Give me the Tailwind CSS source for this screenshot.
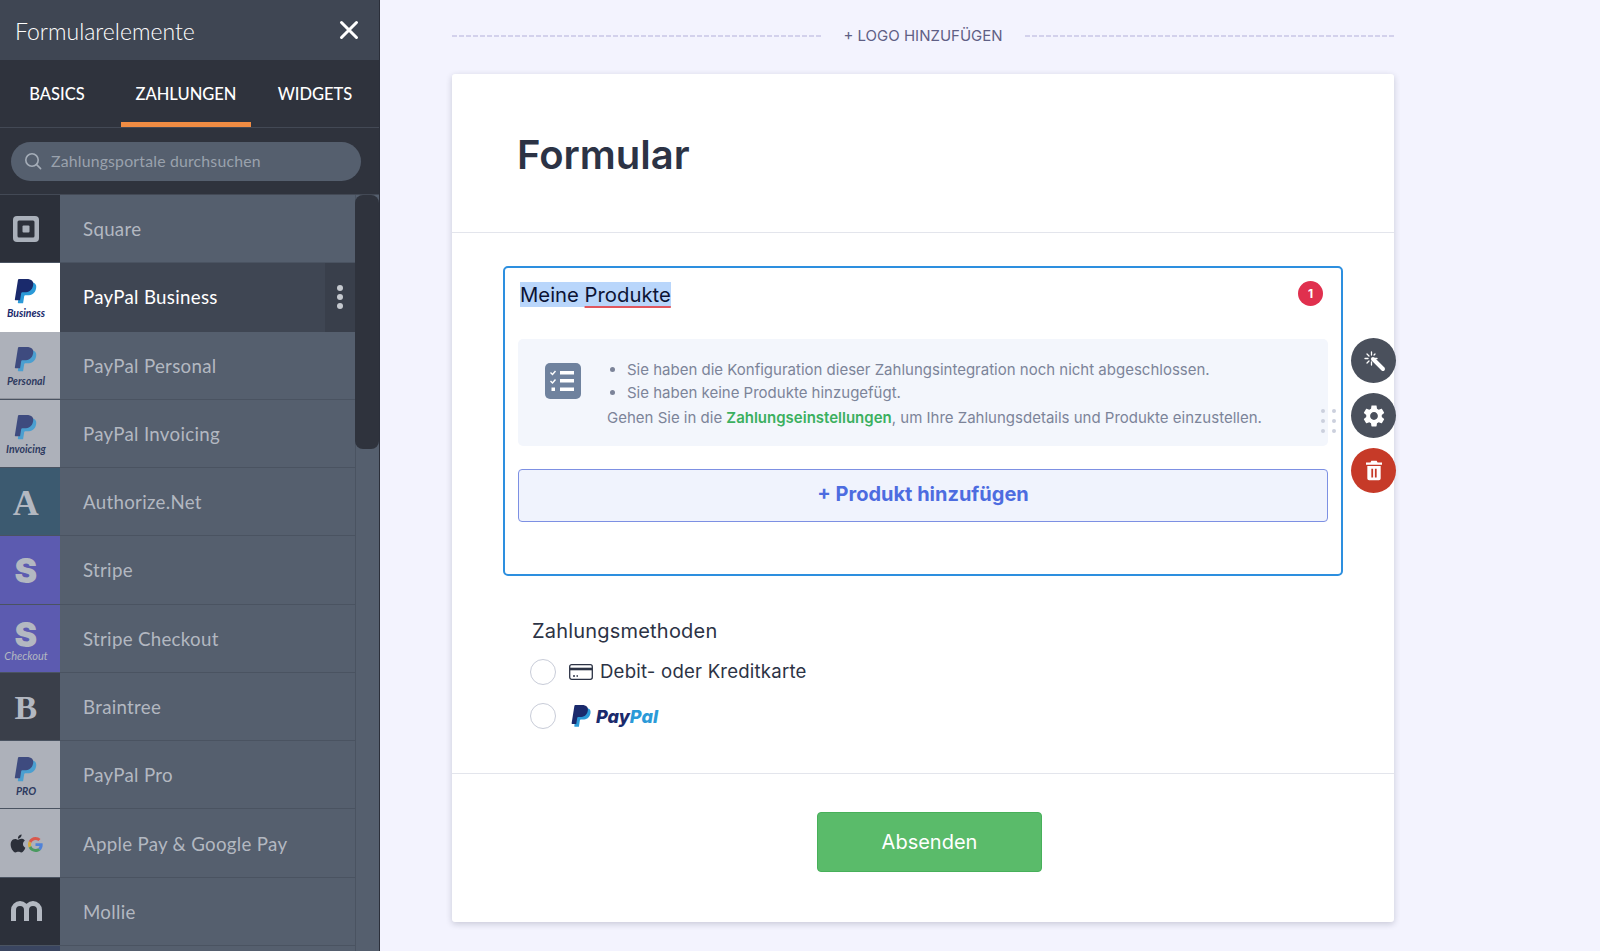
<!DOCTYPE html>
<html lang="de">
<head>
  <meta charset="UTF-8">
  <meta name="viewport" content="width=device-width, initial-scale=1.0">
  <title>Formular</title>
  <script src="https://cdn.jsdelivr.net/npm/@tailwindcss/browser@4"></script>
</head>
<body class="h-[951px] overflow-hidden bg-[#f3f3fe] font-['Inter',sans-serif]">
  <svg class="hidden">
    <symbol id="pp" viewBox="0 0 26 28">
      <path fill="#2b9ad8" d="M10.076 24.337H5.47a.641.641 0 0 1-.633-.74L7.944 3.901C8.026 3.382 8.474 3 8.998 3h7.46c2.57 0 4.578.543 5.69 1.81 1.01 1.15 1.304 2.42 1.012 4.287-.023.143-.047.288-.077.437-.983 5.05-4.349 6.797-8.647 6.797h-2.19c-.524 0-.968.382-1.05.9l-1.12 7.106z"/>
      <path fill="#1a2a6c" d="M7.076 21.337H2.47a.641.641 0 0 1-.633-.74L4.944.901C5.026.382 5.474 0 5.998 0h7.46c2.57 0 4.578.543 5.69 1.81 1.01 1.15 1.304 2.42 1.012 4.287-.023.143-.047.288-.077.437-.983 5.05-4.349 6.797-8.647 6.797h-2.19c-.524 0-.968.382-1.05.9l-1.12 7.106z"/>
    </symbol>
  </svg>

  <div class="flex h-full">
    <!-- Sidebar -->
    <aside class="relative w-[380px] shrink-0 h-full overflow-hidden border-r border-[#2b2f3a] bg-[#555f6e] font-['Lato',sans-serif]">
      <div class="h-[60px] flex items-center justify-between pl-[15px] pr-[20px] bg-[#3f4653]">
        <span class="pt-[3px] text-[23px] font-light text-white">Formularelemente</span>
        <svg class="w-[20px] h-[20px]" viewBox="0 0 20 20" fill="none" stroke="white" stroke-width="3" stroke-linecap="round"><path d="M2.5 2.5l15 15M17.5 2.5l-15 15"/></svg>
      </div>

      <div class="h-[68px] flex bg-[#2f333d] border-b border-[#434955] text-white text-[16.5px] font-medium">
        <div class="w-[121px] flex items-center justify-center pr-[7px] pt-[2px]">BASICS</div>
        <div class="w-[130px] flex items-center justify-center pt-[7px] border-b-[5px] border-[#f08c43]">ZAHLUNGEN</div>
        <div class="flex-1 flex items-center justify-center pt-[2px]">WIDGETS</div>
      </div>

      <div class="h-[67px] flex items-center pl-[11px] pr-[18px] bg-[#2f333d] border-b border-[#434955]">
        <div class="h-[39px] w-full flex items-center gap-[9px] pl-[13px] rounded-full bg-[#555f6e]">
          <svg class="w-[18px] h-[18px]" viewBox="0 0 18 18" fill="none" stroke="#a5adb8" stroke-width="1.6" stroke-linecap="round"><circle cx="8" cy="8" r="6.2"/><path d="M12.6 12.6l4 4"/></svg>
          <span class="text-[15.8px] tracking-[0.2px] text-[#9aa2ad]">Zahlungsportale durchsuchen</span>
        </div>
      </div>

      <div class="w-[355px] text-[18.7px] tracking-[0.3px] text-[#b3b8c1]">
        <div class="h-[68.27px] flex border-b border-[#4a5361]">
          <div class="w-[60px] shrink-0 flex items-center justify-center pr-[8px] bg-[#2c303a]">
            <svg class="w-[26px] h-[26px]" viewBox="0 0 26 26"><rect width="26" height="26" rx="4" fill="#aab0ba"/><rect x="4.5" y="4.5" width="17" height="17" rx="1.5" fill="#2c303a"/><rect x="9.5" y="9.5" width="7" height="7" rx="1" fill="#aab0ba"/></svg>
          </div>
          <div class="flex-1 flex items-center pl-[23px]">Square</div>
        </div>

        <div class="h-[68.27px] flex bg-[#3f4653] text-white">
          <div class="w-[60px] shrink-0 flex flex-col items-center justify-center pt-[4px] pr-[8px] bg-white">
            <svg class="w-[26px] h-[28px] shrink-0"><use href="#pp"/></svg>
            <span class="text-[10.5px] leading-[12px] tracking-normal italic font-bold text-[#1a2a6c]">Business</span>
          </div>
          <div class="flex-1 flex items-center pl-[23px]">PayPal Business</div>
          <div class="w-[30px] flex flex-col items-center justify-center gap-[3px] bg-[#393f4b]">
            <span class="w-[6px] h-[6px] rounded-full bg-[#c5c9cf]"></span>
            <span class="w-[6px] h-[6px] rounded-full bg-[#c5c9cf]"></span>
            <span class="w-[6px] h-[6px] rounded-full bg-[#c5c9cf]"></span>
          </div>
        </div>

        <div class="h-[68.27px] flex border-b border-[#4a5361]">
          <div class="w-[60px] shrink-0 flex flex-col items-center justify-center pt-[4px] pr-[8px] bg-[#adb1ba] border-b border-[#8f939c]">
            <svg class="w-[26px] h-[28px] shrink-0 opacity-75"><use href="#pp"/></svg>
            <span class="text-[10.5px] leading-[12px] tracking-normal italic font-bold text-[#2d3a60]">Personal</span>
          </div>
          <div class="flex-1 flex items-center pl-[23px] pt-[1px]">PayPal Personal</div>
        </div>

        <div class="h-[68.27px] flex border-b border-[#4a5361]">
          <div class="w-[60px] shrink-0 flex flex-col items-center justify-center pt-[4px] pr-[8px] bg-[#adb1ba]">
            <svg class="w-[26px] h-[28px] shrink-0 opacity-75"><use href="#pp"/></svg>
            <span class="text-[10.5px] leading-[12px] tracking-normal italic font-bold text-[#2d3a60]">Invoicing</span>
          </div>
          <div class="flex-1 flex items-center pl-[23px] pt-[1px]">PayPal Invoicing</div>
        </div>

        <div class="h-[68.27px] flex border-b border-[#4a5361]">
          <div class="w-[60px] shrink-0 flex items-center justify-center pr-[8px] pt-[2px] bg-[#3c5a70] font-['Liberation_Serif',serif] font-bold text-[36px] text-[#b3b8c1]">A</div>
          <div class="flex-1 flex items-center pl-[23px]">Authorize.Net</div>
        </div>

        <div class="h-[68.27px] flex border-b border-[#4a5361]">
          <div class="w-[60px] shrink-0 flex items-center justify-center pr-[8px] pt-[2px] bg-[#5c5bb0] font-['Inter',sans-serif] font-black text-[34px] text-[#b3b8c1]">S</div>
          <div class="flex-1 flex items-center pl-[23px] pt-[1px]">Stripe</div>
        </div>

        <div class="h-[68.27px] flex border-b border-[#4a5361]">
          <div class="w-[60px] shrink-0 flex flex-col items-center justify-center pr-[8px] pt-[7px] bg-[#5c5bb0] text-[#b3b8c1]">
            <span class="font-['Inter',sans-serif] font-black text-[34px] leading-[28px]">S</span>
            <span class="text-[11px] leading-[14px] tracking-normal italic whitespace-nowrap">Checkout</span>
          </div>
          <div class="flex-1 flex items-center pl-[23px] pt-[1px]">Stripe Checkout</div>
        </div>

        <div class="h-[68.27px] flex border-b border-[#4a5361]">
          <div class="w-[60px] shrink-0 flex items-center justify-center pr-[8px] pt-[2px] bg-[#3a3f4a] font-['Liberation_Serif',serif] font-bold text-[34px] text-[#b3b8c1]">B</div>
          <div class="flex-1 flex items-center pl-[23px] pt-[1px]">Braintree</div>
        </div>

        <div class="h-[68.27px] flex border-b border-[#4a5361]">
          <div class="w-[60px] shrink-0 flex flex-col items-center justify-center pt-[4px] pr-[8px] bg-[#adb1ba]">
            <svg class="w-[26px] h-[28px] shrink-0 opacity-75"><use href="#pp"/></svg>
            <span class="text-[10.5px] leading-[12px] tracking-normal italic font-bold text-[#2d3a60]">PRO</span>
          </div>
          <div class="flex-1 flex items-center pl-[23px] pt-[1px]">PayPal Pro</div>
        </div>

        <div class="h-[68.27px] flex border-b border-[#4a5361]">
          <div class="w-[60px] shrink-0 flex items-center justify-center gap-[1px] pr-[8px] bg-[#adb1ba]">
            <svg class="w-[18px] h-[19px] shrink-0" viewBox="0 0 24 24" fill="#2c303a"><path d="M12.152 6.896c-.948 0-2.415-1.078-3.96-1.04-2.04.027-3.91 1.183-4.961 3.014-2.117 3.675-.546 9.103 1.519 12.09 1.013 1.454 2.208 3.09 3.792 3.039 1.52-.065 2.09-.987 3.935-.987 1.831 0 2.35.987 3.96.948 1.637-.026 2.676-1.48 3.676-2.948 1.156-1.688 1.636-3.325 1.662-3.415-.039-.013-3.182-1.221-3.22-4.857-.026-3.04 2.48-4.494 2.597-4.559-1.429-2.09-3.623-2.324-4.39-2.376-2-.156-3.675 1.09-4.61 1.09zM15.53 3.83c.843-1.012 1.4-2.427 1.245-3.83-1.207.052-2.662.805-3.532 1.818-.78.896-1.454 2.338-1.273 3.714 1.338.104 2.715-.688 3.559-1.701"/></svg>
            <svg class="w-[15px] h-[15px] shrink-0 mt-[2px]" viewBox="0 0 48 48">
              <path fill="#d9584c" d="M24 9.5c3.54 0 6.71 1.22 9.21 3.6l6.85-6.85C35.9 2.38 30.47 0 24 0 14.62 0 6.51 5.38 2.56 13.22l7.98 6.19C12.43 13.72 17.74 9.5 24 9.5z"/>
              <path fill="#4f82d8" d="M46.98 24.55c0-1.57-.15-3.09-.38-4.55H24v9.02h12.94c-.58 2.96-2.26 5.48-4.78 7.18l7.73 6c4.51-4.18 7.09-10.36 7.09-17.65z"/>
              <path fill="#d8ab3a" d="M10.53 28.59c-.5-1.45-.78-2.99-.78-4.59s.27-3.14.78-4.59l-7.98-6.19C.92 16.46 0 20.12 0 24c0 3.88.92 7.54 2.56 10.78l7.97-6.19z"/>
              <path fill="#4a9a60" d="M24 48c6.48 0 11.93-2.13 16.03-5.81l-7.73-6c-2.15 1.45-4.92 2.3-8.3 2.3-6.26 0-11.57-4.22-13.47-9.91l-7.98 6.19C6.51 42.62 14.62 48 24 48z"/>
            </svg>
          </div>
          <div class="flex-1 flex items-center pl-[23px] pt-[1px]">Apple Pay &amp; Google Pay</div>
        </div>

        <div class="h-[68.27px] flex border-b border-[#4a5361]">
          <div class="w-[60px] shrink-0 flex items-center justify-center pr-[8px] bg-[#2c303a]">
            <svg class="w-[31px] h-[20px] shrink-0" viewBox="0 0 31 20" fill="none" stroke="#b3b8c1" stroke-width="5"><path d="M2.5 20V9a6.5 6.5 0 0 1 13 0v11M15.5 9a6.5 6.5 0 0 1 13 0v11"/></svg>
          </div>
          <div class="flex-1 flex items-center pl-[23px] pt-[1px]">Mollie</div>
        </div>

        <div class="h-[68.27px] flex">
          <div class="w-[60px] shrink-0 bg-[#3a4560]"></div>
          <div class="flex-1"></div>
        </div>
      </div>

      <!-- Scrollbar -->
      <div class="absolute left-[355px] top-[195px] bottom-0 w-[24px] border-l border-[#4a5361]"></div>
      <div class="absolute left-[355px] top-[195px] w-[24px] h-[254px] rounded-[8px] bg-[#2f333d]"></div>
    </aside>

    <!-- Main -->
    <main class="ml-[72px] w-[942px]">
      <div class="h-[74px] flex items-center gap-[22px] pb-[3px] text-[15px] text-[#5f5f85]">
        <div class="flex-1 h-[2px] bg-[repeating-linear-gradient(90deg,#d3d1ec_0,#d3d1ec_5px,transparent_5px,transparent_7px)]"></div>
        <span class="pt-[2px]">+ LOGO HINZUFÜGEN</span>
        <div class="flex-1 h-[2px] bg-[repeating-linear-gradient(90deg,#d3d1ec_0,#d3d1ec_5px,transparent_5px,transparent_7px)]"></div>
      </div>

      <div class="h-[848px] rounded-[3px] bg-white shadow-[0_2px_6px_rgba(30,35,60,0.2)]">
        <div class="h-[159px] flex items-center pl-[65px] pt-[4px] border-b border-[#e3e5ec]">
          <h1 class="text-[40px] font-semibold text-[#2c3345]">Formular</h1>
        </div>

        <div class="pt-[33px] pl-[51px] pr-[51px]">
          <div class="relative h-[310px] rounded-[5px] border-2 border-[#2d8fdf] px-[13px]">
            <div class="h-[71px] pt-[13px] pl-[2px] text-[20.3px] leading-[28px] text-[#0c1334]">
              <span class="bg-[#b9d6fb]">Meine <span class="underline decoration-[#e0565e] underline-offset-[4px]">Produkte</span></span>
            </div>
            <div class="absolute right-[18px] top-[13px] w-[25px] h-[25px] rounded-full bg-[#e0304e] flex items-center justify-center text-white text-[12px] font-bold">1</div>

            <div class="h-[107px] flex rounded-[5px] bg-[#f3f6fc] text-[15px] text-[#7c8499]">
              <div class="w-[89px] shrink-0 flex justify-center pt-[24px]">
                <svg class="w-[36px] h-[36px]" viewBox="0 0 36 36">
                  <rect width="36" height="36" rx="5" fill="#6f829e"/>
                  <path d="M5.5 9.5l2 2 3-3.5M5.5 18l2 2 3-3.5" fill="none" stroke="white" stroke-width="1.4"/>
                  <path d="M15 8h14v3.5H15zM15 16h14v3.5H15zM15 24.5h14V28H15zM6.5 24.5h3.5V28H6.500z" fill="white"/>
                </svg>
              </div>
              <div class="pt-[20px]">
                <ul class="list-disc pl-[20px] leading-[22.500px]">
                  <li>Sie haben die Konfiguration dieser Zahlungsintegration noch nicht abgeschlossen.</li>
                  <li>Sie haben keine Produkte hinzugefügt.</li>
                </ul>
                <p class="mt-[3px] leading-[22px]">Gehen Sie in die <span class="font-semibold text-[#3bb05f]">Zahlungseinstellungen</span>, um Ihre Zahlungsdetails und Produkte einzustellen.</p>
              </div>
            </div>

            <div class="mt-[23px] h-[53px] flex items-center justify-center pb-[3px] rounded-[4px] border border-[#7d90e3] bg-[#f0f3fd] text-[20px] font-bold text-[#4d6ce0]">+ Produkt hinzufügen</div>

            <!-- Drag handle -->
            <div class="absolute right-[5px] top-[141px] grid grid-cols-2 gap-x-[7px] gap-y-[6px]">
              <span class="w-[4px] h-[4px] rounded-full bg-[#ccd0dd]"></span><span class="w-[4px] h-[4px] rounded-full bg-[#ccd0dd]"></span>
              <span class="w-[4px] h-[4px] rounded-full bg-[#ccd0dd]"></span><span class="w-[4px] h-[4px] rounded-full bg-[#ccd0dd]"></span>
              <span class="w-[4px] h-[4px] rounded-full bg-[#ccd0dd]"></span><span class="w-[4px] h-[4px] rounded-full bg-[#ccd0dd]"></span>
            </div>

            <!-- Tool buttons -->
            <div class="absolute left-[846px] top-[70px] flex flex-col gap-[10px]">
              <div class="w-[45px] h-[45px] rounded-full bg-[#4a505c] flex items-center justify-center">
                <svg class="w-[24px] h-[24px]" viewBox="0 0 24 24" fill="none" stroke="white"><path d="M11 10l10 10" stroke-width="4" stroke-linecap="round"/><path d="M9.500 3v3M9.500 13v3M3 9.500h3M13 9.500h2M5 5l2 2M5 14l2-2M13 5l-1 1" stroke-width="1.300" stroke-linecap="round"/></svg>
              </div>
              <div class="w-[45px] h-[45px] rounded-full bg-[#4a505c] flex items-center justify-center">
                <svg class="w-[26px] h-[26px]" viewBox="0 0 24 24" fill="white"><path d="M19.14 12.94c.04-.3.06-.61.06-.94 0-.32-.02-.64-.07-.94l2.03-1.58c.18-.14.23-.41.12-.61l-1.92-3.32c-.12-.22-.37-.29-.59-.22l-2.39.96c-.5-.38-1.03-.7-1.62-.94l-.36-2.54c-.04-.24-.24-.41-.48-.41h-3.84c-.24 0-.43.17-.47.41l-.36 2.54c-.59.24-1.13.57-1.62.94l-2.39-.96c-.22-.08-.47 0-.59.22L2.74 8.87c-.12.21-.08.47.12.61l2.03 1.58c-.05.3-.09.63-.09.94s.02.64.07.94l-2.03 1.58c-.18.14-.23.41-.12.61l1.92 3.32c.12.22.37.29.59.22l2.39-.96c.5.38 1.03.7 1.62.94l.36 2.54c.05.24.24.41.48.41h3.84c.24 0 .44-.17.47-.41l.36-2.54c.59-.24 1.13-.56 1.62-.94l2.39.96c.22.08.47 0 .59-.22l1.92-3.32c.12-.22.07-.47-.12-.61l-2.01-1.58zM12 15.6c-1.98 0-3.6-1.62-3.6-3.6s1.62-3.6 3.6-3.6 3.6 1.62 3.6 3.6-1.62 3.6-3.6 3.6z"/></svg>
              </div>
              <div class="w-[45px] h-[45px] rounded-full bg-[#c63a28] flex items-center justify-center">
                <svg class="w-[16px] h-[21px]" viewBox="0 0 18 22" fill="white"><path d="M6 0h6l1 2h5v2.500H0V2h5zM1.500 6h15v14a2 2 0 0 1-2 2h-11a2 2 0 0 1-2-2zM6 9v10h2V9zM10 9v10h2V9z" fill-rule="evenodd"/></svg>
              </div>
            </div>
          </div>

          <div class="mt-[41px] pl-[29px] text-[#2c3345]">
            <div class="text-[20px] leading-[28px] tracking-[0.2px]">Zahlungsmethoden</div>
            <div class="mt-[14px] -ml-[2px] flex items-center h-[26px]">
              <span class="w-[26px] h-[26px] rounded-full border border-[#c8ccd8]"></span>
              <svg class="ml-[13px] w-[24px] h-[16px]" viewBox="0 0 24 16" fill="none" stroke="#2c3345" stroke-width="1.300"><rect x="0.700" y="0.700" width="22.600" height="14.600" rx="2"/><path d="M1 5h22" stroke-width="2.600"/><path d="M4 12h2M7.500 12h1.500"/></svg>
              <span class="ml-[7px] text-[18.600px] tracking-[0.2px]">Debit- oder Kreditkarte</span>
            </div>
            <div class="mt-[18px] -ml-[2px] flex items-center h-[26px]">
              <span class="w-[26px] h-[26px] rounded-full border border-[#c8ccd8]"></span>
              <svg class="ml-[14px] mt-[2px] w-[23px] h-[25px]"><use href="#pp"/></svg>
              <span class="ml-[3px] text-[18px] font-extrabold italic text-[#1a2a6c]">Pay<span class="text-[#2b9ad8]">Pal</span></span>
            </div>
          </div>
        </div>

        <div class="mt-[44px] border-t border-[#e3e5ec] flex justify-center pt-[38px] pl-[13px]">
          <div class="w-[225px] h-[60px] flex items-center justify-center rounded-[4px] border border-[#47b05a] bg-[#5abb6a] text-white text-[20px]">Absenden</div>
        </div>
      </div>
    </main>
  </div>
</body>
</html>
